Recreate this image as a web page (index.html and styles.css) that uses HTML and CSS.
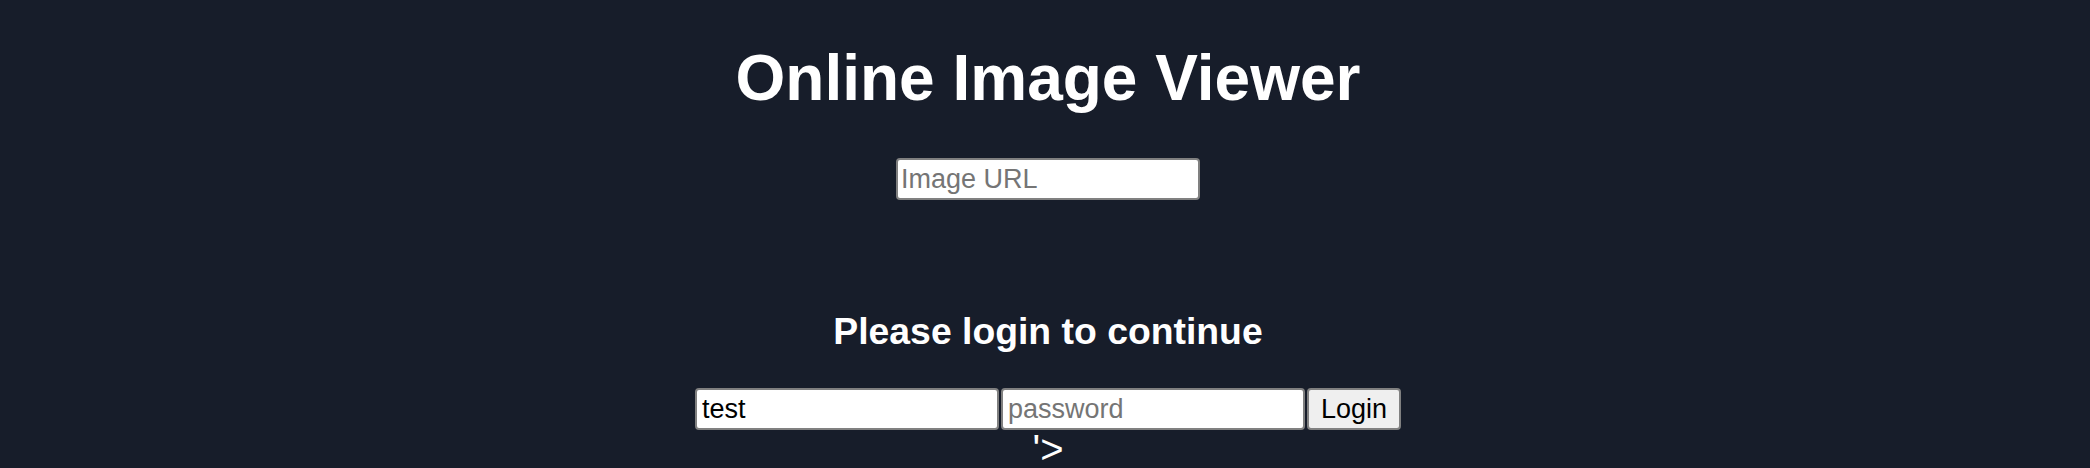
FILE: index.html
```html
<!DOCTYPE html>
<html lang="en">
<head>
<meta charset="utf-8">
<title>Online Image Viewer</title>
<link rel="stylesheet" href="styles.css">
</head>
<body>
<main class="page">
  <h1 class="title">Online Image Viewer</h1>
  <form class="url-form">
    <input class="field url-field" type="text" placeholder="Image URL">
  </form>
  <h3 class="login-heading">Please login to continue</h3>
  <form class="login-form">
    <input class="field login-field" type="text" value="test">
    <input class="field login-field" type="password" placeholder="password">
    <button class="btn" type="button">Login</button>
  </form>
  <p class="stray">'&gt;</p>
</main>
</body>
</html>
```

FILE: styles.css
```css
html, body {
  margin: 0;
  padding: 0;
  background: #171d2a;
  height: 100%;
  overflow: hidden;
}

body {
  font-family: "Liberation Sans", Arial, Helvetica, sans-serif;
  color: #ffffff;
}

.page {
  display: flex;
  flex-direction: column;
  align-items: center;
  padding-left: 6px;
}

.title {
  margin: 41px 0 0;
  font-size: 64px;
  line-height: 74px;
  font-weight: 700;
}

.url-form {
  margin-top: 43px;
  display: flex;
}

.field {
  box-sizing: border-box;
  width: 304px;
  height: 42px;
  margin: 0;
  padding: 2px 5px;
  border: 2px solid #808080;
  border-radius: 4px;
  background: #ffffff;
  color: #000000;
  font-family: "Liberation Sans", Arial, Helvetica, sans-serif;
  font-size: 27px;
  outline: none;
}

.url-field {
  padding-left: 3px;
}

.field::placeholder {
  color: #757575;
  opacity: 1;
}

.login-heading {
  margin: 110px 0 0;
  font-size: 37.33px;
  line-height: 43px;
  font-weight: 700;
}

.login-form {
  margin-top: 35px;
  display: flex;
  gap: 2px;
}

.btn {
  box-sizing: border-box;
  height: 42px;
  margin: 0;
  padding: 2px 12px;
  border: 2px solid #808080;
  border-radius: 4px;
  background: #efefef;
  color: #000000;
  font-family: "Liberation Sans", Arial, Helvetica, sans-serif;
  font-size: 27px;
}

.stray {
  margin: -4px 0 0;
  font-size: 40px;
  line-height: 46px;
}
```
